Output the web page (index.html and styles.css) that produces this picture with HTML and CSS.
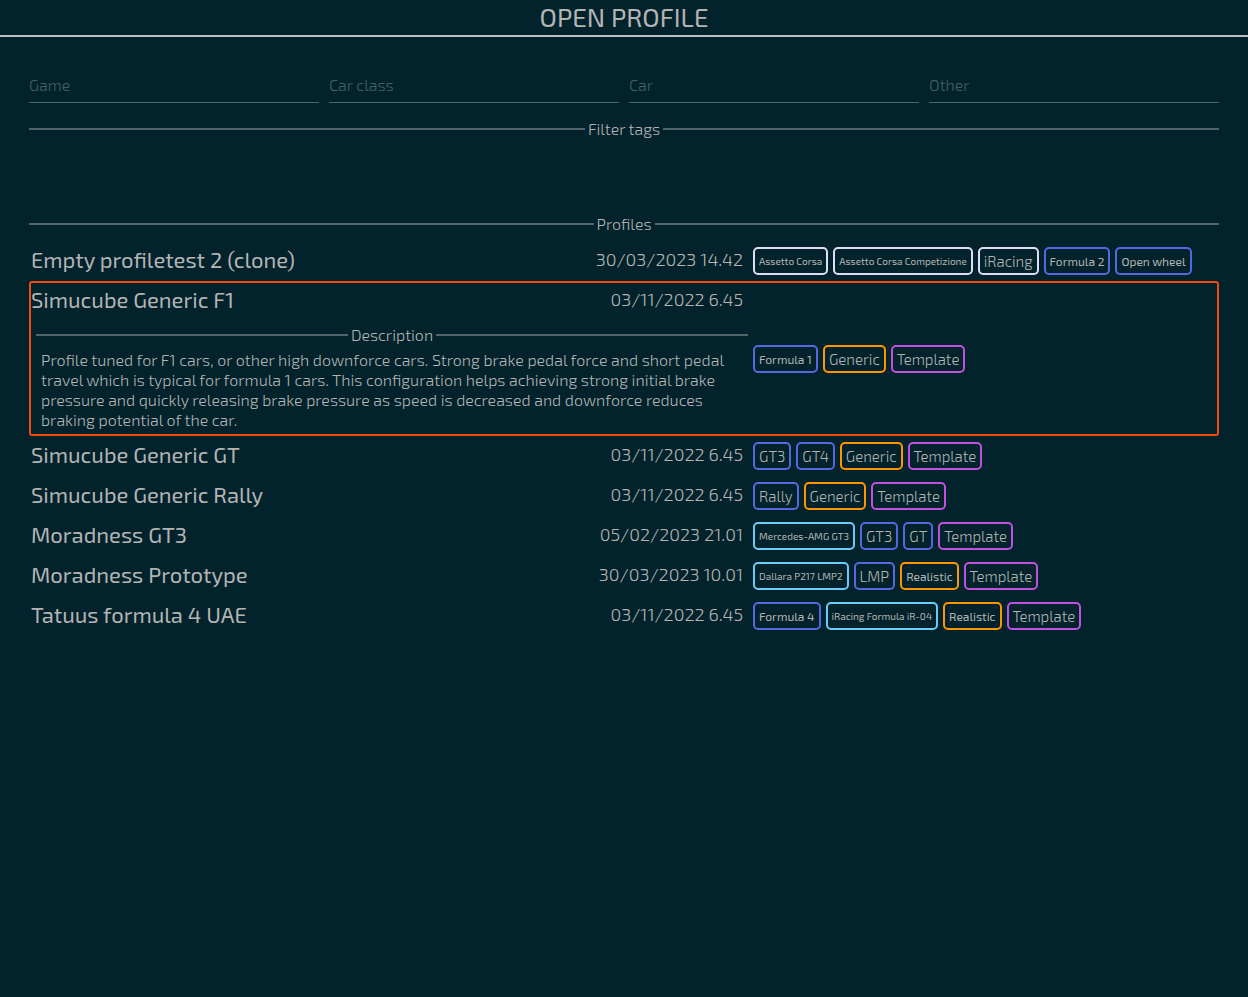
FILE: index.html
```html
<!DOCTYPE html>
<html lang="en">
<head>
<meta charset="utf-8">
<meta name="viewport" content="width=device-width, initial-scale=1">
<title>Open profile</title>
<link rel="stylesheet" href="styles.css">
</head>
<body>
<header class="title-bar"><h1 class="title">OPEN PROFILE</h1></header>
<main class="content">
  <form class="filters">
    <input class="filter" type="text" placeholder="Game" aria-label="Game">
    <input class="filter" type="text" placeholder="Car class" aria-label="Car class">
    <input class="filter" type="text" placeholder="Car" aria-label="Car">
    <input class="filter" type="text" placeholder="Other" aria-label="Other">
  </form>
  <section class="filter-tags"><h2 class="divider">Filter tags</h2></section>
  <section>
    <h2 class="divider">Profiles</h2>
    <ul class="profiles">
      <li class="profile">
        <div class="info"><div class="summary"><h3 class="name">Empty profiletest 2 (clone)</h3><time class="date">30/03/2023 14.42</time></div></div>
        <div class="tags"><span class="tag game small">Assetto Corsa</span><span class="tag game small">Assetto Corsa Competizione</span><span class="tag game">iRacing</span><span class="tag class medium">Formula 2</span><span class="tag class medium">Open wheel</span></div>
      </li>
      <li class="profile selected">
        <div class="info">
          <div class="summary"><h3 class="name">Simucube Generic F1</h3><time class="date">03/11/2022 6.45</time></div>
          <div class="details">
            <h4 class="divider">Description</h4>
            <p class="description">Profile tuned for F1 cars, or other high downforce cars. Strong brake pedal force and short pedal travel which is typical for formula 1 cars. This configuration helps achieving strong initial brake pressure and quickly releasing brake pressure as speed is decreased and downforce reduces braking potential of the car.</p>
          </div>
        </div>
        <div class="tags"><span class="tag class medium">Formula 1</span><span class="tag other">Generic</span><span class="tag template">Template</span></div>
      </li>
      <li class="profile">
        <div class="info"><div class="summary"><h3 class="name">Simucube Generic GT</h3><time class="date">03/11/2022 6.45</time></div></div>
        <div class="tags"><span class="tag class">GT3</span><span class="tag class">GT4</span><span class="tag other">Generic</span><span class="tag template">Template</span></div>
      </li>
      <li class="profile">
        <div class="info"><div class="summary"><h3 class="name">Simucube Generic Rally</h3><time class="date">03/11/2022 6.45</time></div></div>
        <div class="tags"><span class="tag class">Rally</span><span class="tag other">Generic</span><span class="tag template">Template</span></div>
      </li>
      <li class="profile">
        <div class="info"><div class="summary"><h3 class="name">Moradness GT3</h3><time class="date">05/02/2023 21.01</time></div></div>
        <div class="tags"><span class="tag car small">Mercedes-AMG GT3</span><span class="tag class">GT3</span><span class="tag class">GT</span><span class="tag template">Template</span></div>
      </li>
      <li class="profile">
        <div class="info"><div class="summary"><h3 class="name">Moradness Prototype</h3><time class="date">30/03/2023 10.01</time></div></div>
        <div class="tags"><span class="tag car small">Dallara P217 LMP2</span><span class="tag class">LMP</span><span class="tag other medium">Realistic</span><span class="tag template">Template</span></div>
      </li>
      <li class="profile">
        <div class="info"><div class="summary"><h3 class="name">Tatuus formula 4 UAE</h3><time class="date">03/11/2022 6.45</time></div></div>
        <div class="tags"><span class="tag class medium">Formula 4</span><span class="tag car small">iRacing Formula iR-04</span><span class="tag other medium">Realistic</span><span class="tag template">Template</span></div>
      </li>
    </ul>
  </section>
</main>
</body>
</html>
```
FILE: styles.css
```css
* { box-sizing: border-box; }

body {
  margin: 0;
  min-height: 100vh;
  background: #02232b;
  color: #b4b4b4;
  font-family: "Exo 2", Roboto, sans-serif;
  font-size: 16px;
  font-weight: 300;
  line-height: 20px;
}

h1, h2, h3, h4, p, ul { margin: 0; padding: 0; font-weight: 300; }

.title-bar { padding-bottom: 2px; border-bottom: 2px solid #bebebe; text-align: center; }
.title { font-size: 26px; font-weight: 400; line-height: 33px; }

.content { padding: 33px 29px 0; }

.filters {
  display: grid;
  grid-template-columns: repeat(4, minmax(0, 1fr));
  gap: 10px;
}
.filter {
  min-width: 0;
  height: 33px;
  padding: 0 0 3px;
  border: 0;
  border-bottom: 1px solid #4f656a;
  border-radius: 0;
  outline: 0;
  background: transparent;
  color: inherit;
  font: inherit;
}
.filter::placeholder { color: #456068; opacity: 1; }

.filter-tags { min-height: 112px; padding-top: 16px; }
.filter-tags + section { margin-top: -1px; }

.divider {
  display: flex;
  align-items: center;
  gap: 3px;
  font-size: 16px;
  line-height: 20px;
}
.divider::before, .divider::after {
  content: "";
  flex: 1;
  height: 2px;
  background: #4f656a;
}

.profiles { padding-top: 7px; list-style: none; }
.profile {
  display: grid;
  grid-template-columns: minmax(0, 17fr) minmax(0, 11fr);
  gap: 5px;
  align-items: center;
  border: 2px solid transparent;
  border-radius: 3px;
}
.selected { border-color: #f04a10; }

.summary {
  display: flex;
  justify-content: space-between;
  align-items: center;
  padding: 0 5px 4px 0;
}
.name { font-size: 22px; font-weight: 400; line-height: 32px; }
.date { font-size: 18px; }

.details { padding: 6px 0 4px 5px; }
.description { padding: 5px 10px 0 5px; }

.tags { display: flex; flex-wrap: wrap; gap: 5px; }
.tag {
  padding: 0 4px;
  border: 2px solid;
  border-radius: 5px;
  font-size: 15px;
  line-height: 24px;
  white-space: nowrap;
}
.tag::first-line { color: #b4b4b4; }
.medium { font-size: 12px; font-weight: 400; }
.small { font-size: 10px; font-weight: 400; }
.game { border-color: #e0dcf8; }
.class { border-color: #5468e0; }
.car { border-color: #6acbf8; }
.other { border-color: #ff9500; }
.template { border-color: #c050e0; }
```
